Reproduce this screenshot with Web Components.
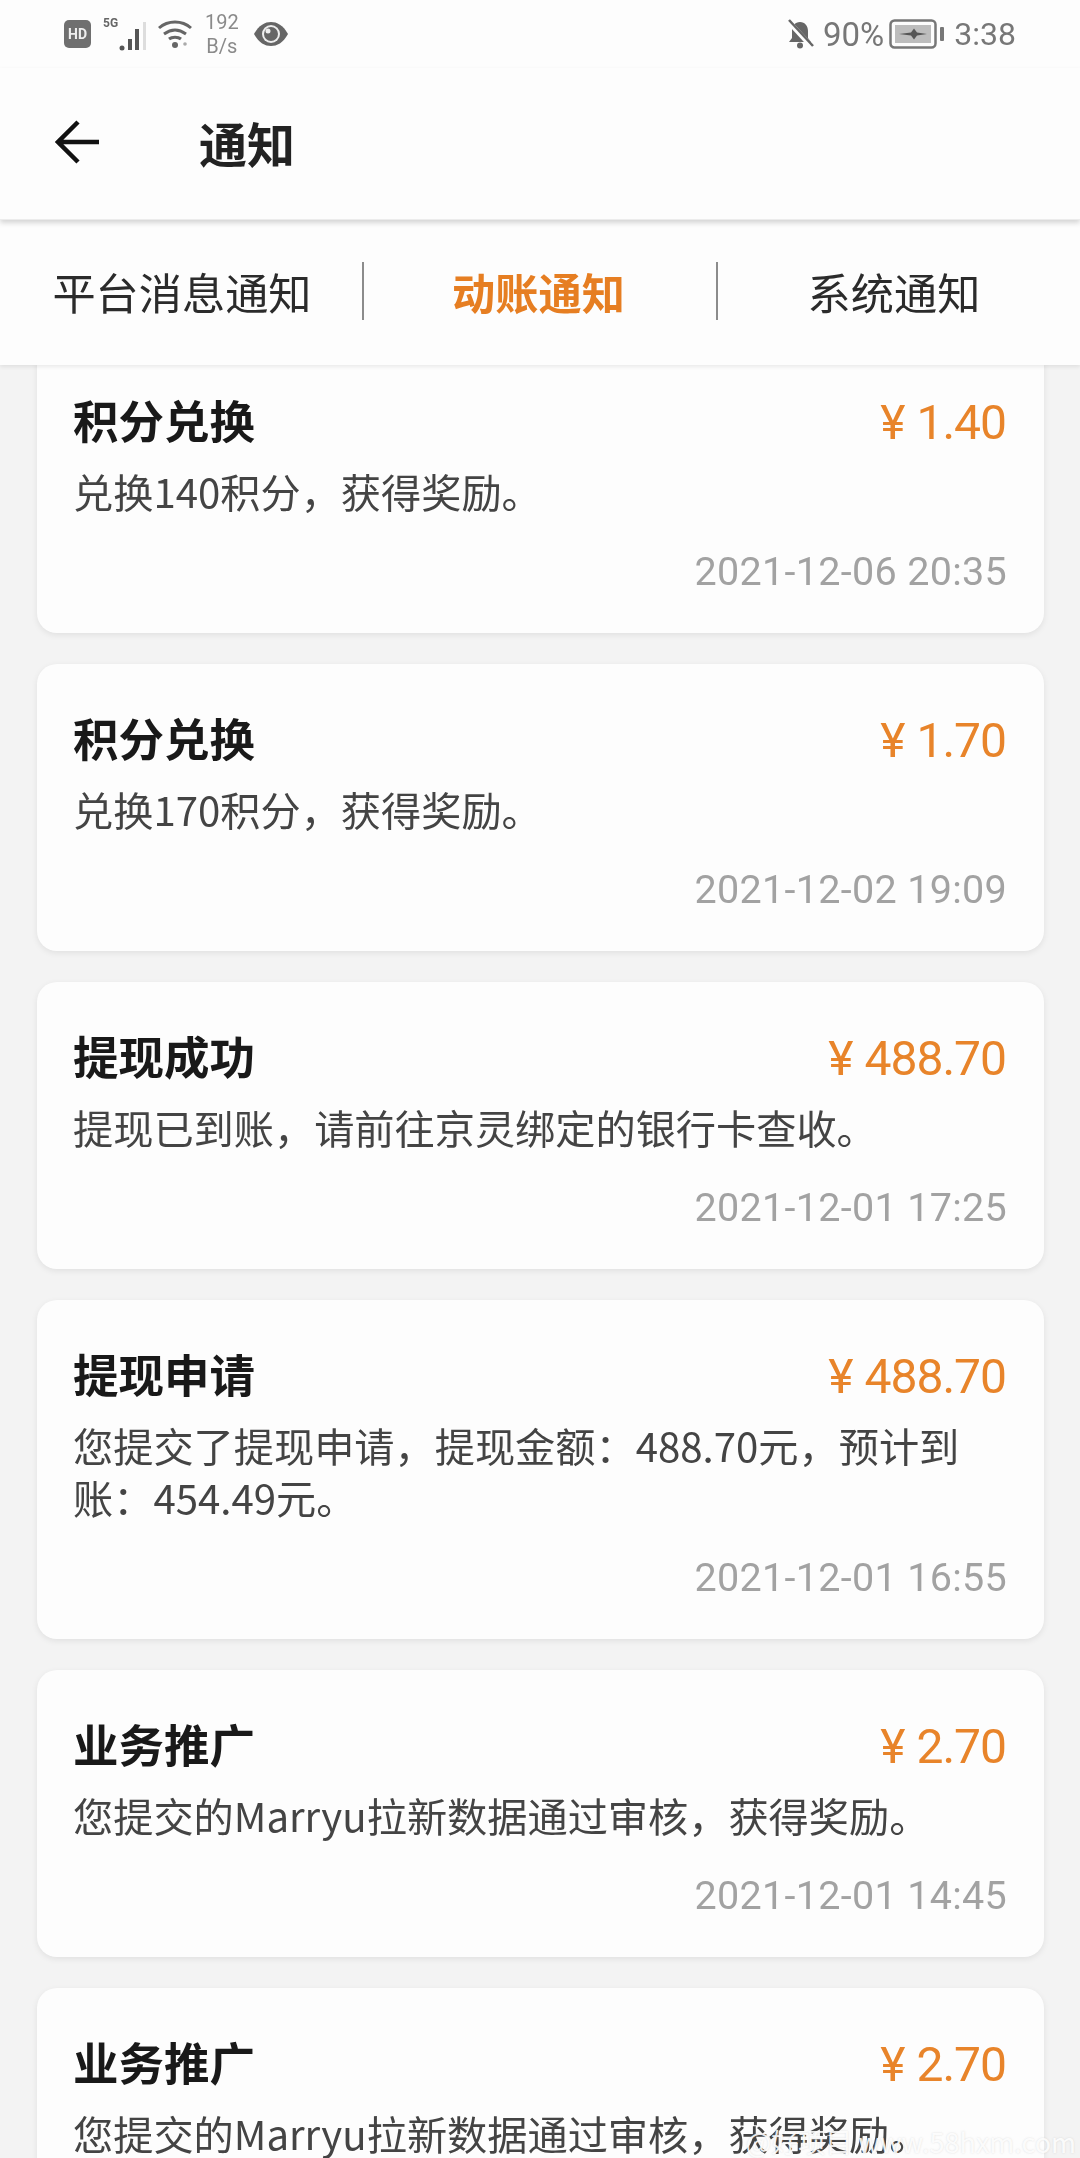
<!DOCTYPE html>
<html lang="zh">
<head>
<meta charset="utf-8">
<style>
  html, body { margin: 0; height: 100%; }
  body {
    width: 1080px;
    height: 2158px;
    overflow: hidden;
    background: #f3f3f3;
    font-family: "Noto Sans CJK SC", "Noto Sans", sans-serif;
    display: flex;
    flex-direction: column;
    position: relative;
  }
</style>
</head>
<body>
<status-bar></status-bar>
<title-bar>通知</title-bar>
<tab-bar>
  <tab-item>平台消息通知</tab-item>
  <tab-item active>动账通知</tab-item>
  <tab-item>系统通知</tab-item>
</tab-bar>
<notice-list>
  <notice-card heading="积分兑换" amount="1.40" time="2021-12-06 20:35">兑换140积分，获得奖励。</notice-card>
  <notice-card heading="积分兑换" amount="1.70" time="2021-12-02 19:09">兑换170积分，获得奖励。</notice-card>
  <notice-card heading="提现成功" amount="488.70" time="2021-12-01 17:25">提现已到账，请前往京灵绑定的银行卡查收。</notice-card>
  <notice-card heading="提现申请" amount="488.70" time="2021-12-01 16:55">您提交了提现申请，提现金额：488.70元，预计到账：454.49元。</notice-card>
  <notice-card heading="业务推广" amount="2.70" time="2021-12-01 14:45">您提交的Marryu拉新数据通过审核，获得奖励。</notice-card>
  <notice-card heading="业务推广" amount="2.70">您提交的Marryu拉新数据通过审核，获得奖励。</notice-card>
</notice-list>
<water-mark>@好项目 www.58hxm.com</water-mark>

<script>
class StatusBar extends HTMLElement {
  connectedCallback() {
    this.attachShadow({ mode: 'open' });
    this.shadowRoot.innerHTML = `
      <style>
        :host {
          display: flex;
          justify-content: space-between;
          align-items: center;
          height: 68px;
          padding: 0 64px;
          background: #fdfdfd;
          color: #777;
          font-family: Roboto, sans-serif;
          flex: none;
        }
        .side { display: flex; align-items: center; filter: blur(.5px); }
        .speed { font-size: 20px; line-height: 24px; text-align: center; color: #8a8a8a; margin: 0 14px 0 12px; }
        .pct { font-size: 33px; margin: 0 5px 0 9px; }
        .clock { font-size: 32px; margin-left: 9px; }
        svg { display: block; flex: none; }
      </style>
      <div class="side">
        <svg width="27" height="28" viewBox="0 0 27 28"><rect width="27" height="28" y="0" rx="5" fill="#6f6f6f"/><text x="13.5" y="19" font-size="14" font-weight="700" font-family="Roboto" text-anchor="middle" fill="#eee">HD</text></svg>
        <svg width="44" height="36" viewBox="0 0 44 36" style="margin-left:12px"><text x="0" y="11" font-size="12" font-weight="700" font-family="Roboto" fill="#666">5G</text><g fill="#555"><circle cx="19" cy="32" r="2.500"/><rect x="25" y="23" width="4" height="11"/><rect x="32" y="13" width="4" height="21"/></g><rect x="40" y="6" width="3" height="28" fill="#ddd"/></svg>
        <svg width="36" height="30" viewBox="0 0 36 30" style="margin-left:10px" fill="none" stroke="#666" stroke-width="3"><path d="M2 9c9-8 23-8 32 0"/><path d="M7 15c7-5 15-5 22 0"/><path d="M12 20c3-2.500 9-2.500 12 0"/><circle cx="18" cy="26" r="3" fill="#666" stroke="none"/><circle cx="28" cy="25" r="1.800" fill="#aaa" stroke="none"/></svg>
        <div class="speed">192<br>B/s</div>
        <svg width="36" height="26" viewBox="0 0 36 26"><path d="M1 13C6 4 12 1 18 1s12 3 17 12c-5 9-11 12-17 12S6 22 1 13z" fill="#666"/><circle cx="18" cy="13" r="9" fill="#eee"/><circle cx="18" cy="13" r="7" fill="#666"/><circle cx="15" cy="10" r="2.500" fill="#eee"/></svg>
      </div>
      <div class="side">
        <svg width="28" height="30" viewBox="0 0 28 30"><path d="M14 3c-5 0-8 4-8 9v7l-3 4h22l-3-4v-7c0-5-3-9-8-9z" fill="#666"/><circle cx="14" cy="26.500" r="3" fill="#666"/><path d="M2 2l24 26" stroke="#fdfdfd" stroke-width="5"/><path d="M3 1l24 26" stroke="#666" stroke-width="2.500"/></svg>
        <span class="pct">90%</span>
        <svg width="56" height="30" viewBox="0 0 56 30"><rect x="1.500" y="1.500" width="45" height="27" rx="4" fill="none" stroke="#777" stroke-width="2.500"/><rect x="6" y="6" width="36" height="18" fill="#bdbdbd"/><path d="M10 15l12-1.500 3-4 3 4 10 1.500-10 1.500-3 4-3-4z" fill="#555"/><rect x="51" y="8" width="4" height="14" rx="1" fill="#777"/></svg>
        <span class="clock">3:38</span>
      </div>`;
  }
}

class TitleBar extends HTMLElement {
  connectedCallback() {
    this.attachShadow({ mode: 'open' });
    this.shadowRoot.innerHTML = `
      <style>
        :host {
          display: flex;
          align-items: center;
          height: 152px;
          box-sizing: border-box;
          padding: 0 0 4px 55px;
          background: #fdfdfd;
          border-bottom: 1px solid #ececec;
          box-shadow: 0 3px 5px rgba(0,0,0,.16);
          flex: none;
          position: relative;
          z-index: 3;
        }
        h1 { margin: 0 0 0 98px; font-size: 48px; font-weight: 700; line-height: 1; color: #222; filter: blur(.5px); }
        svg { display: block; filter: blur(.4px); }
      </style>
      <svg width="46" height="46" viewBox="0 0 46 46" fill="none" stroke="#111" stroke-width="4.500"><path d="M2 23h42M23 3L3 23l20 20"/></svg>
      <h1><slot></slot></h1>`;
  }
}

class TabBar extends HTMLElement {
  connectedCallback() {
    this.attachShadow({ mode: 'open' });
    this.shadowRoot.innerHTML = `
      <style>
        :host {
          display: grid;
          grid-template-columns: 364px 354px 352px;
          height: 145px;
          background: #fdfdfd;
          box-shadow: 0 2px 4px rgba(0,0,0,.08);
          flex: none;
          position: relative;
          z-index: 2;
        }
      </style>
      <slot></slot>`;
  }
}

class TabItem extends HTMLElement {
  connectedCallback() {
    this.attachShadow({ mode: 'open' });
    this.shadowRoot.innerHTML = `
      <style>
        :host {
          display: flex;
          align-items: center;
          justify-content: center;
          position: relative;
          font-size: 43.200px;
          line-height: 1;
          color: #2b2b2b;
          padding-bottom: 2px;
        }
        :host([active]) { color: #e67e22; font-weight: 700; padding-right: 5px; }
        :host(:not(:last-child))::after {
          content: "";
          position: absolute;
          right: 0;
          top: 42px;
          width: 2px;
          height: 58px;
          background: #8c8c8c;
        }
        span { filter: blur(.5px); }
      </style>
      <span><slot></slot></span>`;
  }
}

class NoticeList extends HTMLElement {
  connectedCallback() {
    this.attachShadow({ mode: 'open' });
    this.shadowRoot.innerHTML = `
      <style>
        :host {
          display: flex;
          flex-direction: column;
          gap: 31px;
          flex: 1;
          min-height: 0;
          overflow: hidden;
          padding: 0 36px 0 37px;
        }
        /* the list is scrolled a little: first card runs under the tabs */
        ::slotted(:first-child) { margin-top: -19px; }
      </style>
      <slot></slot>`;
  }
}

class NoticeCard extends HTMLElement {
  connectedCallback() {
    const amount = this.getAttribute('amount');
    const time = this.getAttribute('time');
    this.attachShadow({ mode: 'open' });
    this.shadowRoot.innerHTML = `
      <style>
        :host {
          display: block;
          flex: none;
          box-sizing: border-box;
          background: #fdfdfd;
          border-radius: 20px;
          box-shadow: 0 2px 6px rgba(0,0,0,.08);
          padding: 46px 37px 39px 36px;
        }
        .top { display: flex; justify-content: space-between; align-items: center; height: 54px; }
        .title { font-size: 45.500px; font-weight: 700; line-height: 54px; color: #191919; filter: blur(.5px); }
        .amount { font-family: Roboto, sans-serif; font-size: 48px; letter-spacing: -1px; line-height: 54px; color: #e8842a; display: flex; align-items: center; gap: 12px; margin: 8px 1px 0 0; filter: blur(.5px); }
        .body { font-size: 40.200px; line-height: 52px; color: #444; margin-top: 19px; filter: blur(.5px); }
        .time { font-family: Roboto, sans-serif; font-size: 39.500px; letter-spacing: .3px; line-height: 44px; color: #a2a2a2; text-align: right; margin-top: 33px; filter: blur(.5px); }
      </style>
      <div class="top">
        <span class="title">${this.getAttribute('heading')}</span>
        <span class="amount"><span>¥</span><span>${amount}</span></span>
      </div>
      <div class="body"><slot></slot></div>
      ${time ? `<div class="time">${time}</div>` : ''}`;
  }
}

class WaterMark extends HTMLElement {
  connectedCallback() {
    this.attachShadow({ mode: 'open' });
    this.shadowRoot.innerHTML = `
      <style>
        :host {
          position: absolute;
          right: 4px;
          bottom: 0;
          font-size: 27px;
          line-height: 1.2;
          color: rgba(255,255,255,.9);
          text-shadow: 0 0 2px rgba(150,150,150,.3);
          white-space: nowrap;
          z-index: 5;
        }
      </style>
      <slot></slot>`;
  }
}

customElements.define('status-bar', StatusBar);
customElements.define('title-bar', TitleBar);
customElements.define('tab-bar', TabBar);
customElements.define('tab-item', TabItem);
customElements.define('notice-list', NoticeList);
customElements.define('notice-card', NoticeCard);
customElements.define('water-mark', WaterMark);
</script>
</body>
</html>
